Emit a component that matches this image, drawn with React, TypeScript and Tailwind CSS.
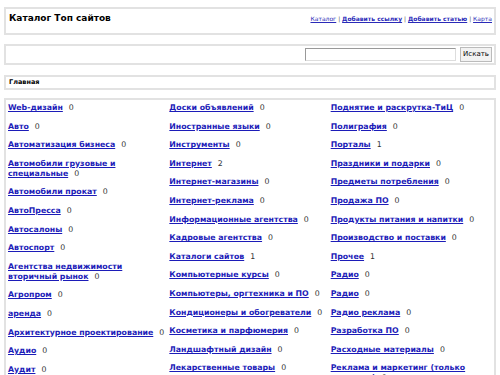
const col1: [string, number][] = [
  ["Web-дизайн", 0],
  ["Авто", 0],
  ["Автоматизация бизнеса", 0],
  ["Автомобили грузовые и специальные", 0],
  ["Автомобили прокат", 0],
  ["АвтоПресса", 0],
  ["Автосалоны", 0],
  ["Автоспорт", 0],
  ["Агентства недвижимости вторичный рынок", 0],
  ["Агропром", 0],
  ["аренда", 0],
  ["Архитектурное проектирование", 0],
  ["Аудио", 0],
  ["Аудит", 0],
];

const col2: [string, number][] = [
  ["Доски объявлений", 0],
  ["Иностранные языки", 0],
  ["Инструменты", 0],
  ["Интернет", 2],
  ["Интернет-магазины", 0],
  ["Интернет-реклама", 0],
  ["Информационные агентства", 0],
  ["Кадровые агентства", 0],
  ["Каталоги сайтов", 1],
  ["Компьютерные курсы", 0],
  ["Компьютеры, оргтехника и ПО", 0],
  ["Кондиционеры и обогреватели", 0],
  ["Косметика и парфюмерия", 0],
  ["Ландшафтный дизайн", 0],
  ["Лекарственные товары", 0],
];

const col3: [string, number][] = [
  ["Поднятие и раскрутка-ТиЦ", 0],
  ["Полиграфия", 0],
  ["Порталы", 1],
  ["Праздники и подарки", 0],
  ["Предметы потребления", 0],
  ["Продажа ПО", 0],
  ["Продукты питания и напитки", 0],
  ["Производство и поставки", 0],
  ["Прочее", 1],
  ["Радио", 0],
  ["Радио", 0],
  ["Радио реклама", 0],
  ["Разработка ПО", 0],
  ["Расходные материалы", 0],
  ["Реклама и маркетинг (только интернет)", 0],
];

const Column = ({ items }: { items: [string, number][] }) => (
  <ul className="flex flex-col gap-[8.6px]">
    {items.map(([name, count], i) => (
      <li key={i} className="text-[7.8px] leading-[10px]">
        <a href="#" className="font-bold text-[#1c1cb8] underline">
          {name}
        </a>
        <span className="ml-[6px] text-[#333]">{count}</span>
      </li>
    ))}
  </ul>
);

export default function App() {
  return (
    <div className="bg-white px-1 pt-[7px] font-['DejaVu_Sans',sans-serif] text-[#222]">
      <div className="flex h-[28px] justify-between border-2 border-[#e2e2e2] pl-[3px] pr-[2px] pt-[3px]">
        <h1 className="text-[9px] font-bold leading-[12px] text-black">Каталог Топ сайтов</h1>
        <div className="pt-[2px] text-[6px] leading-[10px] text-[#555]">
          <a href="#" className="text-[#2a2ab8] underline">Каталог</a> |{" "}
          <a href="#" className="font-bold text-[#2a2ab8] underline">Добавить ссылку</a> |{" "}
          <a href="#" className="font-bold text-[#2a2ab8] underline">Добавить статью</a> |{" "}
          <a href="#" className="text-[#2a2ab8] underline">Карта</a>
        </div>
      </div>

      <div className="mt-[9px] flex h-[21px] items-center justify-end gap-1 border-2 border-[#e2e2e2] pr-[2px]">
        <input className="h-[13px] w-[151px] border border-[#999] border-r-[#ddd] border-b-[#ddd] bg-white" />
        <button className="h-[15px] w-[32px] border border-[#bbb] bg-[#f2f2f2] text-[7px] text-black">
          Искать
        </button>
      </div>

      <div className="mt-[10px] flex h-[15px] items-center border-2 border-[#e2e2e2] pl-[3px]">
        <span className="text-[6.5px] font-bold text-black">Главная</span>
      </div>

      <div className="mt-[8px] grid grid-cols-3 border-2 border-b-0 border-[#e2e2e2] px-[2px] pt-[3px] pb-4">
        <Column items={col1} />
        <Column items={col2} />
        <Column items={col3} />
      </div>
    </div>
  );
}
